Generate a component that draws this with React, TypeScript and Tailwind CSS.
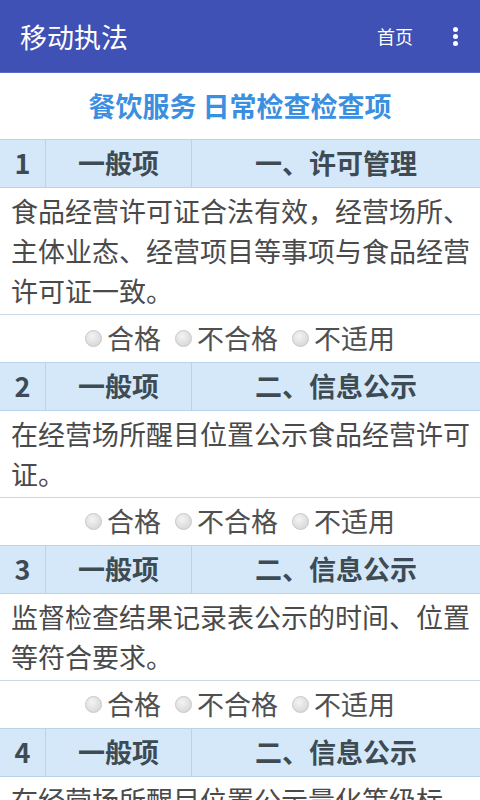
import React from "react"

// 检查项列表
const ITEMS = [
  {
    no: "1",
    level: "一般项",
    category: "一、许可管理",
    desc: "食品经营许可证合法有效，经营场所、主体业态、经营项目等事项与食品经营许可证一致。",
  },
  {
    no: "2",
    level: "一般项",
    category: "二、信息公示",
    desc: "在经营场所醒目位置公示食品经营许可证。",
  },
  {
    no: "3",
    level: "一般项",
    category: "二、信息公示",
    desc: "监督检查结果记录表公示的时间、位置等符合要求。",
  },
  {
    no: "4",
    level: "一般项",
    category: "二、信息公示",
    desc: "在经营场所醒目位置公示量化等级标识。",
  },
]

const OPTIONS = ["合格", "不合格", "不适用"]

function Radio({ label }: { label: string }) {
  return (
    <label className="flex items-center gap-[5px]">
      <span className="w-[17px] h-[17px] rounded-full border border-[#c8c8c8] bg-[radial-gradient(circle_at_40%_35%,#f4f4f4,#d0d0d0)]" />
      <span>{label}</span>
    </label>
  )
}

export default function App() {
  return (
    <div
      className="w-[480px] h-[800px] overflow-hidden bg-white"
      style={{ fontFamily: '"Noto Sans CJK SC", "Noto Sans", sans-serif' }}
    >
      {/* 顶部栏 */}
      <div className="h-[73px] bg-[#3f51b5] flex items-center pl-[20px] pr-[22px] text-white border-b border-[#5b6bc4]">
        <span className="text-[27px] leading-none">移动执法</span>
        <span className="ml-auto text-[18px] leading-none">首页</span>
        <div className="ml-[40px] flex flex-col gap-[2px] items-center">
          <span className="w-[5px] h-[5px] rounded-full bg-white" />
          <span className="w-[5px] h-[5px] rounded-full bg-white" />
          <span className="w-[5px] h-[5px] rounded-full bg-white" />
        </div>
      </div>

      {/* 标题 */}
      <div className="h-[66px] flex items-center justify-center text-[27px] font-bold text-[#3b8fe0]">
        餐饮服务 日常检查检查项
      </div>

      {ITEMS.map((item) => (
        <div key={item.no}>
          <div className="h-[49px] grid grid-cols-[46px_146px_1fr] bg-[#d5e8fa] border-y border-[#b9d3ea] text-[27px] font-bold text-[#3e4b53]">
            <div className="flex items-center justify-center border-r border-[#b9d3ea]">{item.no}</div>
            <div className="flex items-center justify-center border-r border-[#b9d3ea]">{item.level}</div>
            <div className="flex items-center justify-center">{item.category}</div>
          </div>
          <div className="pl-[11px] pr-[8px] py-[3px] text-[27px] leading-[40px] text-[#4a4a4a] border-b border-[#cbd9e6]">
            {item.desc}
          </div>
          <div className="h-[47px] flex items-center justify-center gap-[14px] text-[27px] text-[#505050]">
            {OPTIONS.map((o) => (
              <Radio key={o} label={o} />
            ))}
          </div>
        </div>
      ))}
    </div>
  )
}
